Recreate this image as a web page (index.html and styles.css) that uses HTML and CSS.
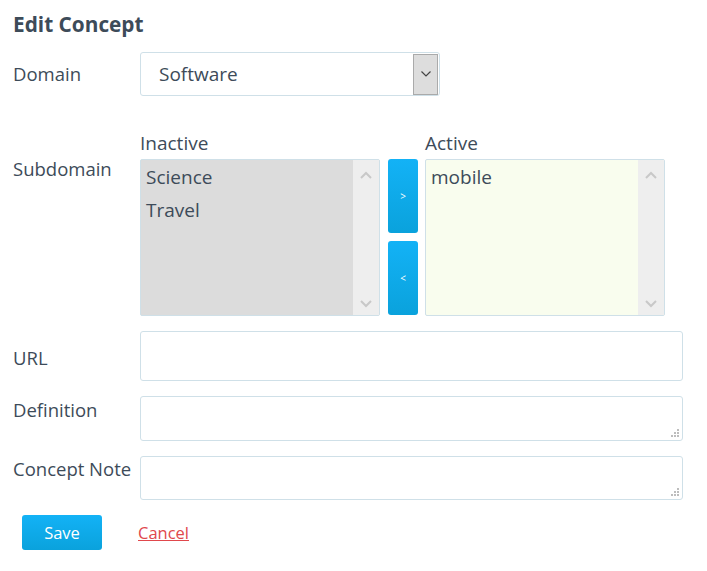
FILE: index.html
```html
<!DOCTYPE html>
<html>
<head>
<meta charset="utf-8">
<link rel="stylesheet" href="styles.css">
</head>
<body>
<div class="page">
  <h1 class="title">Edit Concept</h1>

  <div class="row row-domain">
    <div class="label">Domain</div>
    <div class="select">
      <span class="select-text">Software</span>
      <span class="select-arrow">
        <svg width="12" height="8" viewBox="0 0 12 8"><path d="M1.5 1.5 L6 6 L10.5 1.5" fill="none" stroke="#444" stroke-width="1.2"/></svg>
      </span>
    </div>
  </div>

  <div class="row row-sub">
    <div class="label sub-label">Subdomain</div>
    <div class="dual">
      <div class="col">
        <div class="col-head">Inactive</div>
        <div class="listbox inactive">
          <div class="items">
            <div class="item">Science</div>
            <div class="item">Travel</div>
          </div>
          <div class="scroll">
            <svg width="14" height="8" viewBox="0 0 14 8"><path d="M2 7 L7 2 L12 7" fill="none" stroke="#c8c8c8" stroke-width="2"/></svg>
            <svg width="14" height="8" viewBox="0 0 14 8"><path d="M2 1 L7 6 L12 1" fill="none" stroke="#c8c8c8" stroke-width="2"/></svg>
          </div>
        </div>
      </div>
      <div class="moves">
        <button class="move">&gt;</button>
        <button class="move">&lt;</button>
      </div>
      <div class="col">
        <div class="col-head">Active</div>
        <div class="listbox active">
          <div class="items">
            <div class="item">mobile</div>
          </div>
          <div class="scroll">
            <svg width="14" height="8" viewBox="0 0 14 8"><path d="M2 7 L7 2 L12 7" fill="none" stroke="#c8c8c8" stroke-width="2"/></svg>
            <svg width="14" height="8" viewBox="0 0 14 8"><path d="M2 1 L7 6 L12 1" fill="none" stroke="#c8c8c8" stroke-width="2"/></svg>
          </div>
        </div>
      </div>
    </div>
  </div>

  <div class="row row-url">
    <div class="label">URL</div>
    <div class="input url"></div>
  </div>

  <div class="row row-def">
    <div class="label top">Definition</div>
    <div class="input area">
      <svg class="grip" width="9" height="9" viewBox="0 0 9 9"><g fill="#bdbdbd"><rect x="6" y="0" width="2" height="2"/><rect x="3" y="3" width="2" height="2"/><rect x="6" y="3" width="2" height="2"/><rect x="0" y="6" width="2" height="2"/><rect x="3" y="6" width="2" height="2"/><rect x="6" y="6" width="2" height="2"/></g></svg>
    </div>
  </div>

  <div class="row row-note">
    <div class="label top">Concept Note</div>
    <div class="input area">
      <svg class="grip" width="9" height="9" viewBox="0 0 9 9"><g fill="#bdbdbd"><rect x="6" y="0" width="2" height="2"/><rect x="3" y="3" width="2" height="2"/><rect x="6" y="3" width="2" height="2"/><rect x="0" y="6" width="2" height="2"/><rect x="3" y="6" width="2" height="2"/><rect x="6" y="6" width="2" height="2"/></g></svg>
    </div>
  </div>

  <div class="actions">
    <button class="save">Save</button>
    <a class="cancel" href="#">Cancel</a>
  </div>
</div>
</body>
</html>
```

FILE: styles.css
```css
* { box-sizing: border-box; }
html, body { margin: 0; padding: 0; background: #fff; }
body {
  font-family: "Open Sans", "Lato", sans-serif;
  color: #3d4b59;
}
.page {
  padding: 10px 24px 0 13px;
  width: 707px;
}
.title {
  margin: 0;
  font-size: 20.8px;
  font-weight: 700;
  line-height: 28px;
  color: #3d4b59;
}
.row {
  display: flex;
  align-items: center;
}
.label {
  width: 127px;
  flex: none;
  font-size: 18.5px;
  line-height: 22px;
  white-space: nowrap;
}
.row-domain { margin-top: 14px; height: 44px; }
.select {
  width: 300px;
  height: 44px;
  border: 1px solid #cfe0e8;
  border-radius: 3px;
  display: flex;
  align-items: center;
  padding: 1px;
}
.select-text {
  flex: 1;
  padding-left: 17px;
  font-size: 19px;
}
.select-arrow {
  width: 25px;
  height: 41px;
  background: #dddddd;
  border: 1px solid #aaaaaa;
  display: flex;
  align-items: center;
  justify-content: center;
}
.row-sub {
  margin-top: 35px;
  align-items: flex-start;
}
.sub-label { margin-top: 27px; }
.dual { display: flex; align-items: flex-start; }
.col { display: flex; flex-direction: column; }
.col-head {
  font-size: 19px;
  line-height: 24px;
  height: 28px;
}
.listbox {
  width: 240px;
  height: 157px;
  border: 1px solid #cfe0e8;
  border-radius: 2px;
  display: flex;
}
.inactive { background: #dcdcdc; }
.active { background: #f9fdee; }
.items {
  flex: 1;
  padding: 1px 5px;
  font-size: 19px;
}
.item { line-height: 33px; height: 33px; }
.scroll {
  width: 26px;
  background: #eeeeee;
  display: flex;
  flex-direction: column;
  justify-content: space-between;
  align-items: center;
  padding: 11px 0 7px;
}
.moves {
  display: flex;
  flex-direction: column;
  gap: 8px;
  margin: 28px 7px 0 8px;
}
.move {
  width: 30px;
  height: 74px;
  border: none;
  border-radius: 3px;
  background: linear-gradient(#13b2f6, #0aa2dc);
  color: #fff;
  font-family: "Open Sans", sans-serif;
  font-size: 10px;
  padding: 0;
}
.input {
  width: 543px;
  border: 1px solid #cfe0e8;
  border-radius: 3px;
  background: #fff;
  position: relative;
}
.row-url { margin-top: 15px; }
.url { height: 50px; }
.row-url .label { margin-top: 4px; }
.row-def { margin-top: 15px; align-items: flex-start; }
.row-note { margin-top: 15px; align-items: flex-start; }
.label.top { margin-top: 3px; }
.row-note .label.top { margin-top: 2px; }
.area { height: 45px; }
.row-note .area { height: 44px; }
.grip {
  position: absolute;
  right: 2px;
  bottom: 2px;
  display: block;
}
.actions {
  display: flex;
  align-items: center;
  margin-top: 15px;
  padding-left: 9px;
}
.save {
  width: 80px;
  height: 35px;
  border: none;
  border-radius: 3px;
  background: linear-gradient(#13b2f6, #0aa2dc);
  color: #fff;
  font-family: "Open Sans", sans-serif;
  font-size: 16.5px;
  padding: 0;
}
.cancel {
  margin-left: 36px;
  color: #e0474c;
  font-size: 16.5px;
  text-decoration: underline;
  margin-top: 0;
}
```
